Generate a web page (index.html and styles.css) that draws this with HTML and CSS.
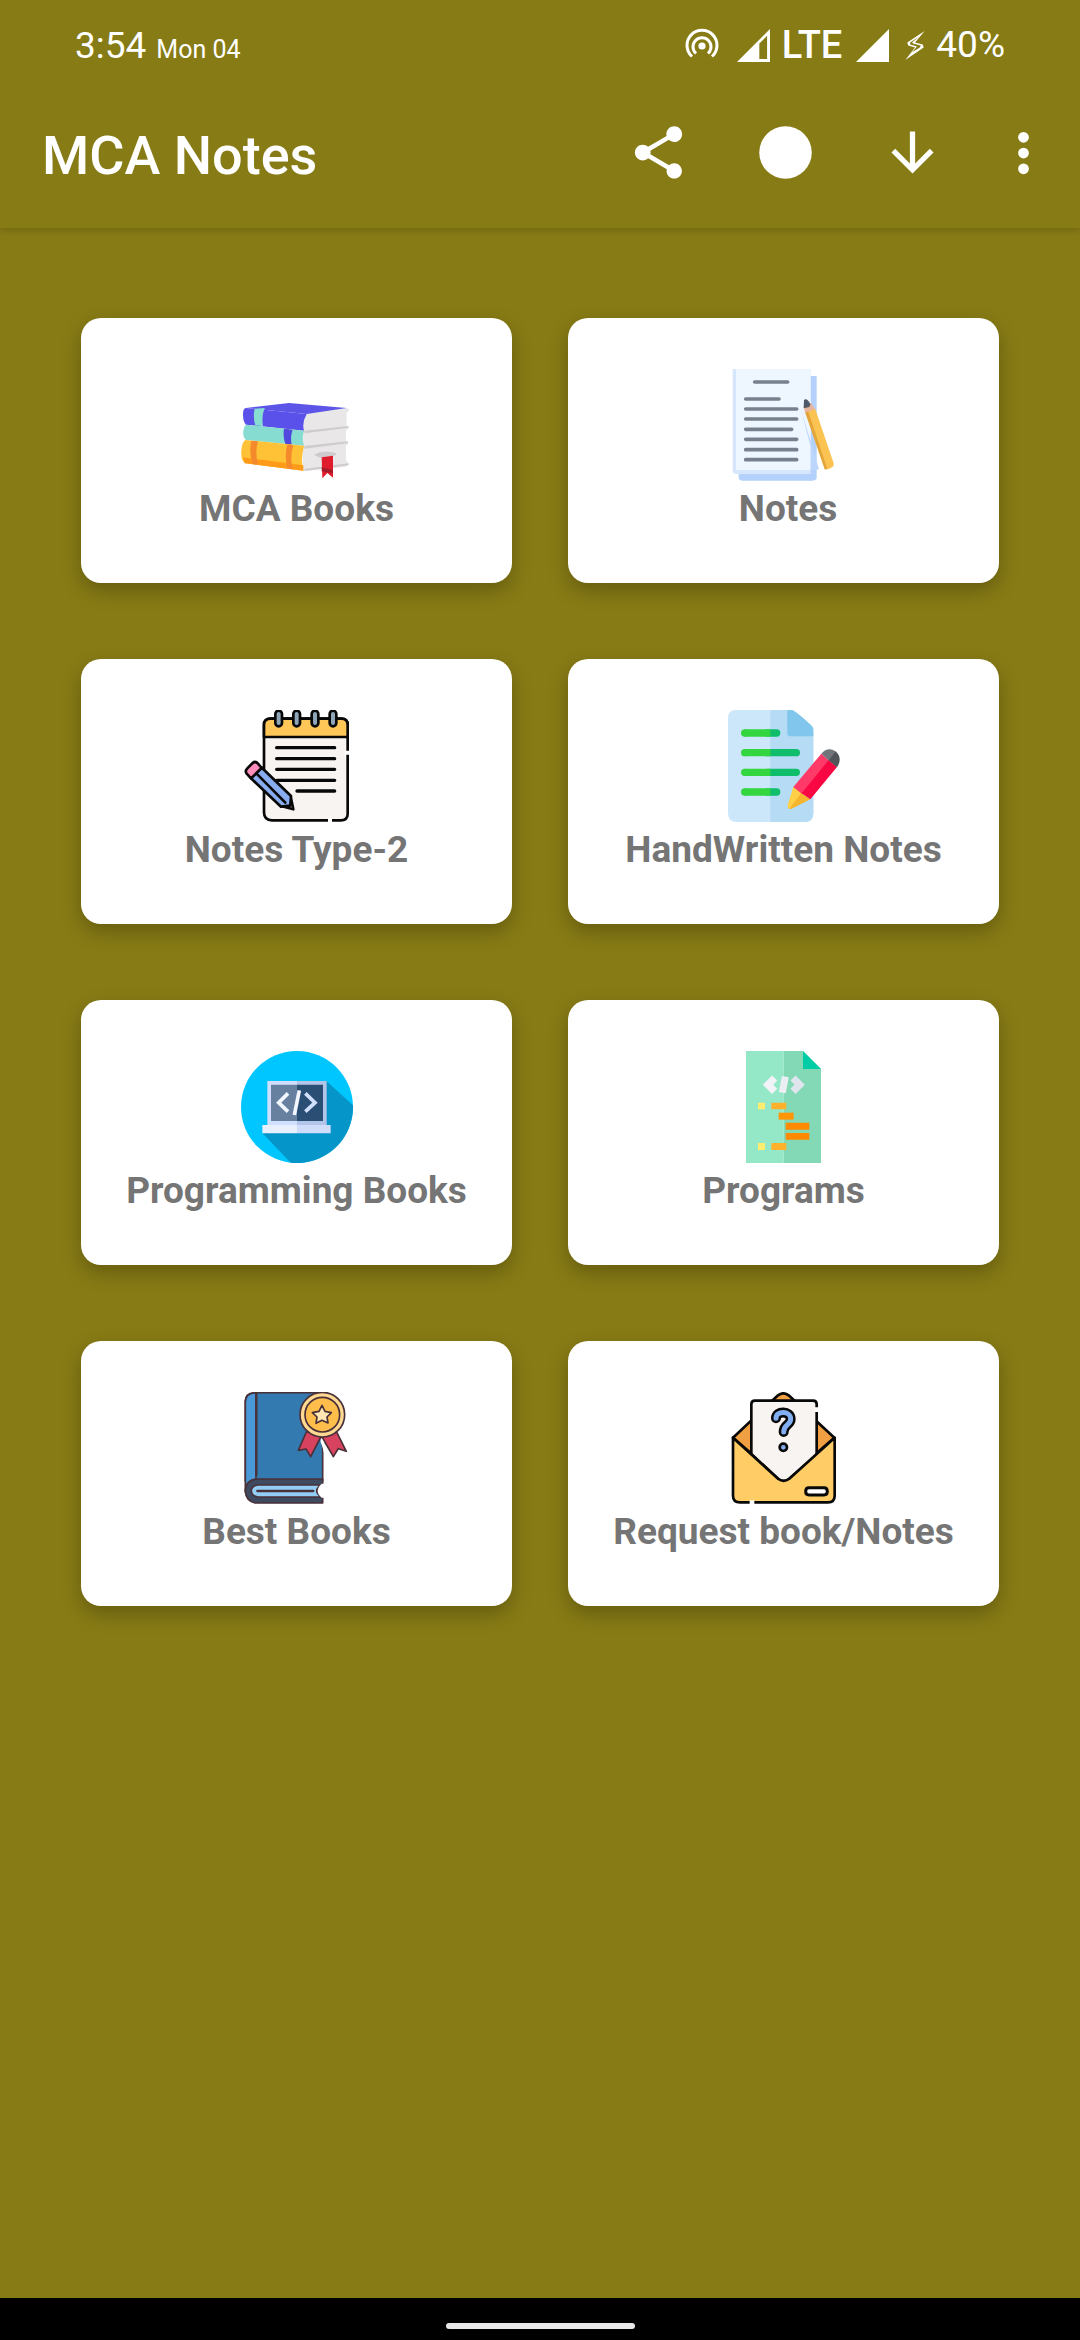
FILE: index.html
```html
<!DOCTYPE html>
<html lang="en">
<head>
<meta charset="utf-8">
<meta name="viewport" content="width=device-width, initial-scale=1">
<title>MCA Notes</title>
<link rel="stylesheet" href="styles.css">
</head>
<body>
<div class="top">
  <div class="status">
    <div class="status-left"><span class="time">3:54</span><span class="date">Mon 04</span></div>
    <div class="status-right">
      <svg class="hotspot" viewBox="0 0 34 34" fill="none" stroke="#fff" stroke-width="3"><circle cx="17" cy="18" r="3.6" fill="#fff" stroke="none"/><path d="M11 25.500A9 9 0 1 1 23 25.500"/><path d="M7 28.500A15 15 0 1 1 27 28.500"/></svg>
      <svg class="signal" viewBox="0 0 34 34"><path fill="#fff" fill-rule="evenodd" d="M0 34L34 0V34ZM23 15V31H31V7Z"/></svg>
      <span class="lte">LTE</span>
      <svg class="signal" viewBox="0 0 34 34"><path fill="#fff" d="M0 34L34 0V34Z"/></svg>
      <svg class="bolt" viewBox="0 0 20 30"><path fill="#fff" fill-rule="evenodd" d="M20 0L2 12L3 15L10 17L0 30L19 17L18 14L10 12ZM14 6L7 12L8 13L16 15L15 17L7 22L12 16L5 14L5 12Z"/></svg>
      <span class="time">40%</span>
    </div>
  </div>
  <header class="appbar">
    <h1>MCA Notes</h1>
    <div class="actions">
      <button type="button" aria-label="Share"><svg viewBox="0 0 24 24"><path d="M18 16.080c-.76 0-1.440.3-1.960.770L8.910 12.700c.05-.23.09-.46.09-.7s-.04-.47-.09-.7l7.050-4.110c.54.5 1.250.81 2.040.81 1.660 0 3-1.340 3-3s-1.340-3-3-3-3 1.340-3 3c0 .24.04.47.09.7L8.040 9.810C7.500 9.310 6.790 9 6 9c-1.660 0-3 1.340-3 3s1.340 3 3 3c.79 0 1.500-.31 2.040-.81l7.120 4.160c-.05.21-.08.43-.08.65 0 1.610 1.310 2.920 2.920 2.920s2.920-1.310 2.920-2.920-1.310-2.920-2.920-2.920z"/></svg></button>
      <button type="button" aria-label="Status"><svg viewBox="0 0 24 24"><circle cx="12" cy="12" r="10"/></svg></button>
      <button type="button" aria-label="Downloads"><svg viewBox="0 0 24 24"><path d="M20 12l-1.410-1.410L13 16.170V4h-2v12.170l-5.580-5.590L4 12l8 8 8-8z"/></svg></button>
      <button type="button" class="more" aria-label="More options"><svg viewBox="0 0 24 24"><circle cx="12" cy="6.200" r="2.050"/><circle cx="12" cy="12.200" r="2.050"/><circle cx="12" cy="18.200" r="2.050"/></svg></button>
    </div>
  </header>
</div>
<main class="grid">
  <button type="button" class="card">
    <svg viewBox="61 -33 336 336">
      <path fill="#e9e7e8" d="M246 100L380 84L386 90L378 98V138L384 145L376 152V184L383 190L376 198V240L384 252L376 260L246 274Z"/>
      <path fill="#d0ccce" d="M250 152L384 138V143L252 160ZM250 198L382 184V190L252 206ZM252 266L384 250V256L252 273Z"/>
      <path fill="#5a50ea" d="M76 84Q66 86 67 106Q68 128 76 134L250 152Q243 128 258 102Z"/>
      <path fill="#5d55e8" d="M76 84L205 69L378 84L258 102Z"/>
      <path fill="#86dfd0" d="M102 86L132 84Q122 108 127 139L104 136Q96 110 102 86Z"/>
      <path fill="#86dcd0" d="M76 134L250 152Q242 174 250 197L76 180Q66 172 68 152Q69 140 76 134Z"/>
      <path fill="#5149dd" d="M190 146L216 149Q208 170 213 194L194 192Q186 168 190 146Z"/>
      <path fill="#ffc136" d="M74 180L250 197Q239 240 248 272L72 249Q60 240 62 212Q64 186 74 180Z"/>
      <path fill="#ff9b19" d="M66 232L248 256V272L72 250Z"/>
      <path fill="#f58a2c" d="M92 182L112 184Q102 218 112 254L96 252Q84 218 92 182ZM200 193L218 195Q206 232 217 268L201 266Q190 230 200 193Z"/>
      <path fill="#cfcacd" d="M280 224Q310 208 348 220L344 226L300 234Z"/>
      <path fill="#e01c2c" d="M303 232L337 227V293L320 279L305 295Z"/><path fill="#a71a2b" d="M303 262L337 270V280L303 274Z"/>
    </svg>
    <span>MCA Books</span>
  </button>
  <button type="button" class="card">
    <svg viewBox="52 57 336 336">
      <path fill="#b4d1fb" d="M84 78H318V382Q318 392 306 392H94Q84 392 84 382Z"/>
      <path fill="#d5e6fd" d="M66 57H300V372H78Q66 372 66 360Z"/><path fill="#eef6ff" d="M76 57H300V360H76Z"/>
      <path fill="#bdd6fb" d="M270 175L325 358L300 362V290Z"/>
      <g stroke="#77818e" stroke-width="11" stroke-linecap="round"><path d="M132 96H231M105 147H205M105 177H258M105 207H258M105 238H243M105 268H258M105 299H258M105 329H258"/></g>
      <path fill="#fbc352" d="M283 185L313 175L369 340Q372 355 344 359Z"/><path fill="#e3a53a" d="M283 185L292 182L350 357L342 358Z"/>
      <path fill="#e9b49c" d="M279 166L301 159L313 178L283 188Z"/><path fill="#4f5968" d="M280 150Q289 142 299 163L296 171L279 175Z"/>
    </svg>
    <span>&nbsp;Notes</span>
  </button>
  <button type="button" class="card">
    <svg viewBox="61 60 336 336" stroke="#080808" stroke-width="8" stroke-linecap="round" stroke-linejoin="round">
      <path fill="#f8f4f2" d="M130 105Q130 86 150 86H362Q381 86 381 105V372Q381 391 360 391H154Q130 391 130 367Z"/>
      <path fill="#ffc757" d="M130 141V105Q130 86 150 86H362Q381 86 381 105V141Z"/>
      <g fill="#8fa5b8"><rect x="164" y="62" width="20" height="47" rx="10"/><rect x="218" y="62" width="20" height="47" rx="10"/><rect x="273" y="62" width="20" height="47" rx="10"/><rect x="327" y="62" width="20" height="47" rx="10"/></g>
      <path fill="none" stroke-width="10" d="M168 173H342M168 206H342M168 238H342M168 271H342M229 303H342"/>
      <path d="M372 188H392M328 384V398" stroke="#fff" stroke-width="12" stroke-linecap="butt"/>
      <path fill="#f3eee7" d="M181 348L210 320L218 358Z"/>
      <path fill="#88acf0" d="M91 265L122 232L211 318L209 347L181 350Z"/>
      <path fill="none" d="M107 250L194 338"/>
      <path fill="#ff8dbb" d="M91 265L78 251Q72 243 80 235L96 219Q104 212 112 221L123 234Z"/>
    </svg>
    <span>Notes Type-2</span>
  </button>
  <button type="button" class="card">
    <svg viewBox="52 60 336 336">
      <path fill="#cce7fa" d="M52 84Q52 60 76 60H242Q252 60 308 115V370Q308 396 282 396H78Q52 396 52 370Z"/>
      <path fill="#b5dbf5" d="M179 60H242Q252 60 308 115V370Q308 396 282 396H179Z"/>
      <path fill="#81c6ec" d="M230 60H242Q254 61 304 108Q308 112 308 139H240Q230 139 230 129Z"/>
      <g stroke-width="22" stroke-linecap="round"><path stroke="#0fbd6a" d="M170 129H198M170 188H257M170 247H257M170 306H198"/><path stroke="#34d640" stroke-linecap="butt" d="M101 129H179M101 188H179M101 247H179M101 306H179"/></g>
      <g fill="#34d640"><circle cx="102" cy="129" r="11"/><circle cx="102" cy="188" r="11"/><circle cx="102" cy="247" r="11"/><circle cx="102" cy="306" r="11"/></g>
      <path fill="#ffd047" d="M248 290L274 310L237 357Q230 354 231 346Z"/><path fill="#f6b52c" d="M272 309L299 328L243 356Q239 358 236 356Z"/>
      <path fill="#ff3968" d="M248 291L332 191L356 212L274 312Z"/><path fill="#f80742" d="M354 210L379 231L299 328L273 310Z"/>
      <path fill="#717479" d="M332 191Q352 168 376 185L355 212Z"/><path fill="#515459" d="M375 184Q397 204 379 232L354 211Z"/>
    </svg>
    <span>HandWritten Notes</span>
  </button>
  <button type="button" class="card">
    <svg viewBox="61 63 336 336">
      <circle cx="229" cy="231" r="168" fill="#00c6ff"/><path fill="#0695c9" d="M318 154L397 226A168 168 0 0 1 210 398L125 309Z"/>
      <path fill="#d0dfff" d="M140 153H229V286H140Z"/><path fill="#b3c5e9" d="M229 153H318V286H229Z"/>
      <path fill="#67809f" d="M151 164H229V273H151Z"/><path fill="#2b4e74" d="M229 164H307V273H229Z"/>
      <path fill="#e8f0ff" d="M125 285H229V310H125Z"/><path fill="#cfdcfb" d="M229 285H330V310H229Z"/>
      <path fill="none" stroke="#f1f6ff" stroke-width="11" d="M202 190L174 218L202 245"/><path fill="none" stroke="#d0e0fc" stroke-width="11" d="M254 190L283 218L254 245"/><path stroke="#f1f6ff" stroke-width="11" d="M236 181L221 255"/>
    </svg>
    <span>Programming Books</span>
  </button>
  <button type="button" class="card">
    <svg viewBox="52 63 336 336">
      <path fill="#95e8c7" d="M106 63H219V399H106Z"/><path fill="#83d9b6" d="M219 63H277L331 117V399H219Z"/><path fill="#00cda5" d="M277 63L331 117H277Z"/>
      <path fill="none" stroke="#f2f3f8" stroke-width="22" d="M192 144L172 164L192 184"/><path fill="none" stroke="#dfe5ed" stroke-width="22" d="M247 144L267 164L247 184"/><path stroke="#ebeff4" stroke-width="21" d="M224 140L215 188"/>
      <path fill="#ffed70" d="M142 218H163V238H142ZM142 339H163V360H142Z"/><path fill="#ffb12b" d="M182 218H227V238H182ZM182 339H227V360H182Z"/><path fill="#ff9507" d="M204 248H249V269H204Z"/><path fill="#ff8900" d="M225 278H296V299H225ZM225 309H296V329H225Z"/>
    </svg>
    <span>Programs</span>
  </button>
  <button type="button" class="card">
    <svg viewBox="61 51 336 336" stroke="#493039" stroke-width="5" stroke-linejoin="round">
      <path fill="#327ab0" d="M74 78Q74 53 106 53H306V318H74Z"/><path fill="#4998d8" d="M74 350V80Q74 55 106 53V312Q84 318 76 340Z"/><path fill="none" stroke-width="7" stroke-linecap="round" d="M107 56V299"/>
      <path fill="#3e4a60" d="M306 312H108Q74 315 74 350Q76 377 103 384H306V365L292 348L306 328Z"/><path fill="#92cdf5" d="M302 330H112Q92 332 92 348Q93 363 112 366H302Q274 347 302 330Z"/><path fill="none" stroke-width="7" stroke-linecap="round" d="M110 348H278"/>
      <path fill="#fff" stroke="none" d="M310 326H303Q279 348 303 368H310ZM299 190L314 182V235L300 202Z"/>
      <path fill="#d7435f" d="M257 171L233 226L256 222L270 245L302 183L338 245L353 221L377 229L348 171Z"/>
      <path fill="#fff" stroke="none" d="M303 190L310 201V235L304 210Z"/>
      <circle cx="305" cy="119" r="67" fill="#ffd991"/><circle cx="305" cy="119" r="52" fill="#ffbd4b"/>
      <path fill="#ffe5b4" d="M304 91L313 109L332 113L319 126L322 144L304 136L286 145L289 126L275 113L295 109Z"/>
    </svg>
    <span>Best Books</span>
  </button>
  <button type="button" class="card">
    <svg viewBox="52 51 336 336" stroke="#080808" stroke-width="8" stroke-linecap="round" stroke-linejoin="round">
      <path fill="#f0a043" d="M67 188L202 61Q218 49 234 61L371 188L220 320Z"/>
      <path fill="#f8f4f2" d="M122 88Q122 77 133 77H307Q318 77 318 88V240L235 312Q219 324 203 312L122 237Z"/>
      <path fill="#ffcc66" d="M67 188L203 312Q219 323 235 312L372 188V362Q372 382 352 382H88Q67 382 67 362Z"/>
      <path fill="#fff" stroke-width="9" d="M295 338H340Q350 338 350 349T340 360H295Q285 360 285 349T295 338Z"/>
      <path fill="none" stroke-width="30" d="M196 130C196 106 240 106 240 132C240 151 219 147 219 171"/>
      <path fill="none" stroke="#82aff1" stroke-width="15" d="M196 130C196 106 240 106 240 132C240 151 219 147 219 171"/>
      <circle cx="218" cy="217" r="11" fill="#82aff1"/>
      <path stroke="#fff" stroke-width="14" stroke-linecap="butt" d="M312 104H328M124 376V390"/>
    </svg>
    <span>Request book/Notes</span>
  </button>
</main>
<div class="navbar"><div class="pill"></div></div>
</body>
</html>
```
FILE: styles.css
```css
* { box-sizing: border-box; }
body {
  margin: 0;
  min-height: 100vh;
  display: flex;
  flex-direction: column;
  background: #877b15;
  color: #fff;
  font-family: Roboto, "Liberation Sans", sans-serif;
}
button {
  border: 0;
  padding: 0;
  background: none;
  color: inherit;
  font: inherit;
}
svg { display: block; }
.top { box-shadow: 0 2px 8px rgba(0, 0, 0, 0.18); }
.status {
  height: 78px;
  padding: 14px 75px 0;
  display: flex;
  justify-content: space-between;
}
.status-left { display: flex; align-items: baseline; gap: 10px; }
.status-right { display: flex; align-items: center; height: 62px; }
.time { font-size: 37px; line-height: 64px; }
.date { font-size: 25px; }
.hotspot { width: 34px; height: 34px; margin-right: 18px; }
.signal { width: 33px; height: 33px; }
.lte { font-size: 38px; line-height: 64px; font-weight: 500; margin: 0 14px 0 12px; }
.bolt { width: 20px; height: 29px; margin: 0 11px 0 16px; }
.appbar {
  height: 150px;
  padding: 0 9px 0 42px;
  display: flex;
  justify-content: space-between;
}
h1 { margin: 0; padding-top: 46px; font-size: 54px; line-height: 64px; font-weight: 500; }
.actions { display: flex; padding-top: 11px; }
.actions button { width: 127px; height: 126px; display: grid; place-items: center; }
.actions .more { width: 95px; }
.actions svg { width: 63px; height: 63px; fill: #fff; }
.grid {
  flex: 1;
  padding: 90px 81px;
  display: grid;
  grid-template-columns: 1fr 1fr;
  align-content: start;
  gap: 76px 56px;
}
.card {
  display: flex;
  flex-direction: column;
  align-items: center;
  gap: 6px;
  padding: 51px 16px 52px;
  border-radius: 20px;
  background: #fff;
  box-shadow: 0 8px 20px rgba(0, 0, 0, 0.25);
  color: #757575;
  font-size: 37px;
  line-height: 44px;
  font-weight: 700;
}
.card svg { width: 112px; height: 112px; }
.navbar {
  height: 42px;
  padding-top: 14px;
  display: grid;
  place-items: center;
  background: #000;
}
.pill { width: 189px; height: 6px; border-radius: 3px; background: #e8e8e8; }
```
